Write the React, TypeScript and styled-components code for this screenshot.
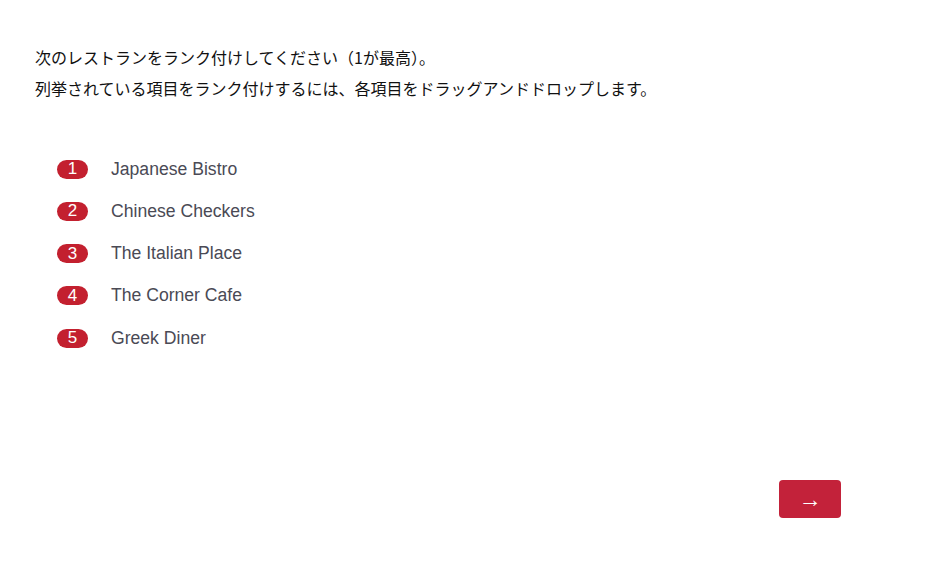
import styled, { createGlobalStyle } from "styled-components";

const GlobalStyle = createGlobalStyle`
  html, body {
    margin: 0;
    padding: 0;
    background: #ffffff;
  }
`;

const restaurants = [
  "Japanese Bistro",
  "Chinese Checkers",
  "The Italian Place",
  "The Corner Cafe",
  "Greek Diner",
];

const App: React.FunctionComponent = () => {
  return (
    <>
      <GlobalStyle />
      <Page>
        <Question>
          <QuestionLine>次のレストランをランク付けしてください（1が最高）。</QuestionLine>
          <QuestionLine>列挙されている項目をランク付けするには、各項目をドラッグアンドドロップします。</QuestionLine>
        </Question>
        <RankList>
          {restaurants.map((name, i) => (
            <RankItem key={name}>
              <Badge>{i + 1}</Badge>
              <ItemLabel>{name}</ItemLabel>
            </RankItem>
          ))}
        </RankList>
        <Footer>
          <NextButton aria-label="next">→</NextButton>
        </Footer>
      </Page>
    </>
  );
};

const Page = styled.main`
  width: 936px;
  height: 562px;
  box-sizing: border-box;
  padding: 42px 0 0 35px;
  display: flex;
  flex-direction: column;
`;

const Question = styled.div`
  display: flex;
  flex-direction: column;
  font-family: "Noto Sans CJK JP", "Liberation Sans", sans-serif;
  font-size: 16px;
  color: #111111;
`;

const QuestionLine = styled.div`
  line-height: 31px;
`;

const RankList = styled.ol`
  list-style: none;
  margin: 55px 0 0 22px;
  padding: 0;
  display: flex;
  flex-direction: column;
  gap: 22.3px;
`;

const RankItem = styled.li`
  display: flex;
  align-items: center;
  height: 20px;
`;

const Badge = styled.span`
  width: 31px;
  height: 19px;
  border-radius: 10px;
  background: #c3202f;
  color: #ffffff;
  font-family: "Liberation Sans", Arial, sans-serif;
  font-size: 17px;
  display: flex;
  align-items: center;
  justify-content: center;
`;

const ItemLabel = styled.span`
  margin-left: 23px;
  font-family: "Liberation Sans", Arial, sans-serif;
  font-size: 17.6px;
  color: #4a4a55;
`;

const Footer = styled.div`
  margin-top: auto;
  margin-bottom: 44px;
  display: flex;
  justify-content: flex-end;
  padding-right: 95px;
`;

const NextButton = styled.button`
  width: 62px;
  height: 38px;
  border: none;
  border-radius: 4px;
  background: #c3223a;
  color: #ffffff;
  font-family: "Liberation Sans", Arial, sans-serif;
  font-size: 23px;
  cursor: pointer;
  display: flex;
  align-items: center;
  justify-content: center;
`;

export default App;
